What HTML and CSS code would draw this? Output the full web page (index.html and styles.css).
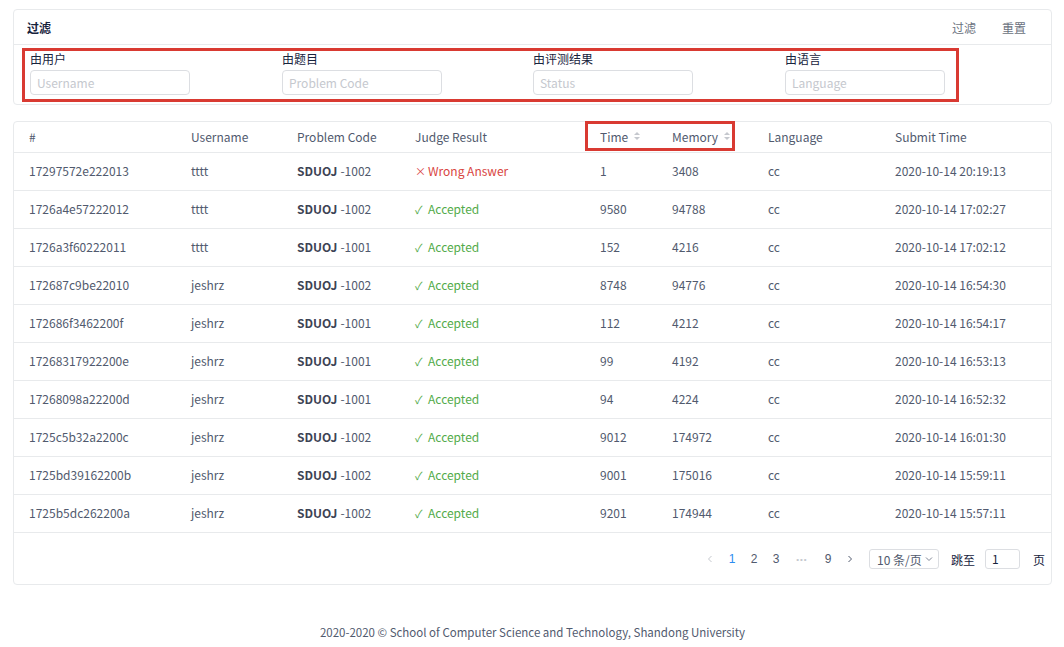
FILE: index.html
```html
<!DOCTYPE html>
<html lang="zh-CN">
<head>
<meta charset="utf-8">
<title>提交列表</title>
<link rel="stylesheet" href="styles.css">
</head>
<body>
<div class="page">
  <section class="card filter-card">
    <div class="card-head">
      <span class="card-title">过滤</span>
      <div class="head-actions">
        <span class="link-btn">过滤</span>
        <span class="link-btn">重置</span>
      </div>
    </div>
    <div class="filter-body">
      <div class="filter-grid">
        <div class="field"><label>由用户</label><div class="input">Username</div></div>
        <div class="field"><label>由题目</label><div class="input">Problem Code</div></div>
        <div class="field"><label>由评测结果</label><div class="input">Status</div></div>
        <div class="field"><label>由语言</label><div class="input">Language</div></div>
      </div>
    </div>
  </section>

  <section class="card table-card">
    <div class="highlight"></div>
    <div class="row head">
      <div class="cell">#</div>
      <div class="cell">Username</div>
      <div class="cell">Problem Code</div>
      <div class="cell">Judge Result</div>
      <div class="cell">Time<span class="sorter"><i class="up"></i><i class="down"></i></span></div>
      <div class="cell">Memory<span class="sorter"><i class="up"></i><i class="down"></i></span></div>
      <div class="cell">Language</div>
      <div class="cell">Submit Time</div>
    </div>
    <div class="row"><div class="cell">17297572e222013</div><div class="cell">tttt</div><div class="cell"><b>SDUOJ</b> -1002</div><div class="cell wa"><span class="ico">×</span>Wrong Answer</div><div class="cell">1</div><div class="cell">3408</div><div class="cell">cc</div><div class="cell">2020-10-14 20:19:13</div></div>
    <div class="row"><div class="cell">1726a4e57222012</div><div class="cell">tttt</div><div class="cell"><b>SDUOJ</b> -1002</div><div class="cell ac"><span class="ico">✓</span>Accepted</div><div class="cell">9580</div><div class="cell">94788</div><div class="cell">cc</div><div class="cell">2020-10-14 17:02:27</div></div>
    <div class="row"><div class="cell">1726a3f60222011</div><div class="cell">tttt</div><div class="cell"><b>SDUOJ</b> -1001</div><div class="cell ac"><span class="ico">✓</span>Accepted</div><div class="cell">152</div><div class="cell">4216</div><div class="cell">cc</div><div class="cell">2020-10-14 17:02:12</div></div>
    <div class="row"><div class="cell">172687c9be22010</div><div class="cell">jeshrz</div><div class="cell"><b>SDUOJ</b> -1002</div><div class="cell ac"><span class="ico">✓</span>Accepted</div><div class="cell">8748</div><div class="cell">94776</div><div class="cell">cc</div><div class="cell">2020-10-14 16:54:30</div></div>
    <div class="row"><div class="cell">172686f3462200f</div><div class="cell">jeshrz</div><div class="cell"><b>SDUOJ</b> -1001</div><div class="cell ac"><span class="ico">✓</span>Accepted</div><div class="cell">112</div><div class="cell">4212</div><div class="cell">cc</div><div class="cell">2020-10-14 16:54:17</div></div>
    <div class="row"><div class="cell">17268317922200e</div><div class="cell">jeshrz</div><div class="cell"><b>SDUOJ</b> -1001</div><div class="cell ac"><span class="ico">✓</span>Accepted</div><div class="cell">99</div><div class="cell">4192</div><div class="cell">cc</div><div class="cell">2020-10-14 16:53:13</div></div>
    <div class="row"><div class="cell">17268098a22200d</div><div class="cell">jeshrz</div><div class="cell"><b>SDUOJ</b> -1001</div><div class="cell ac"><span class="ico">✓</span>Accepted</div><div class="cell">94</div><div class="cell">4224</div><div class="cell">cc</div><div class="cell">2020-10-14 16:52:32</div></div>
    <div class="row"><div class="cell">1725c5b32a2200c</div><div class="cell">jeshrz</div><div class="cell"><b>SDUOJ</b> -1002</div><div class="cell ac"><span class="ico">✓</span>Accepted</div><div class="cell">9012</div><div class="cell">174972</div><div class="cell">cc</div><div class="cell">2020-10-14 16:01:30</div></div>
    <div class="row"><div class="cell">1725bd39162200b</div><div class="cell">jeshrz</div><div class="cell"><b>SDUOJ</b> -1002</div><div class="cell ac"><span class="ico">✓</span>Accepted</div><div class="cell">9001</div><div class="cell">175016</div><div class="cell">cc</div><div class="cell">2020-10-14 15:59:11</div></div>
    <div class="row last"><div class="cell">1725b5dc262200a</div><div class="cell">jeshrz</div><div class="cell"><b>SDUOJ</b> -1002</div><div class="cell ac"><span class="ico">✓</span>Accepted</div><div class="cell">9201</div><div class="cell">174944</div><div class="cell">cc</div><div class="cell">2020-10-14 15:57:11</div></div>

    <div class="pager">
      <span class="pg arrow disabled"><svg width="8" height="8" viewBox="0 0 8 8"><path d="M5.5 1 2.5 4l3 3" fill="none" stroke="currentColor" stroke-width="1"/></svg></span>
      <span class="pg active">1</span>
      <span class="pg">2</span>
      <span class="pg">3</span>
      <span class="pg dots">•••</span>
      <span class="pg">9</span>
      <span class="pg arrow"><svg width="8" height="8" viewBox="0 0 8 8"><path d="M2.5 1 5.5 4l-3 3" fill="none" stroke="currentColor" stroke-width="1"/></svg></span>
      <span class="size-select">10 条/页<svg width="8" height="6" viewBox="0 0 8 6"><path d="M1 1.5 4 4.5 7 1.5" fill="none" stroke="currentColor" stroke-width="1"/></svg></span>
      <span class="jump">跳至</span>
      <span class="jump-input">1</span>
      <span class="jump last">页</span>
    </div>
  </section>

  <footer class="footer">2020-2020 © School of Computer Science and Technology, Shandong University</footer>
</div>
</body>
</html>
```
FILE: styles.css
```css
* { box-sizing: border-box; }
html, body { margin: 0; padding: 0; background: #fff; }
body {
  font-family: "Noto Sans CJK SC", "Noto Sans", sans-serif;
  font-size: 12px;
  color: #515a6e;
  width: 1064px;
}
.page { padding: 9px 12px 0 13px; }

.card {
  border: 1px solid #e8eaec;
  border-radius: 4px;
  background: #fff;
}

.filter-card { height: 96px; }
.card-head {
  height: 35px;
  border-bottom: 1px solid #e8eaec;
  display: flex;
  align-items: center;
  justify-content: space-between;
  padding: 0 25px 0 13px;
}
.card-title { font-weight: 700; color: #17233d; font-size: 12px; }
.head-actions { display: flex; gap: 26px; }
.link-btn { color: #6b7280; }

.filter-body { padding: 3px 0 0 8px; }
.filter-grid {
  width: 937px;
  height: 54px;
  border: 3px solid #d93a32;
  display: grid;
  grid-template-columns: 252px 251px 252px 1fr;
  padding: 0 0 0 5px;
}
.field label { display: block; color: #17233d; line-height: 16px; height: 16px; }
.field .input {
  margin-top: 3px;
  width: 160px;
  height: 25px;
  border: 1px solid #dcdee2;
  border-radius: 4px;
  color: #c5c8ce;
  padding: 0 6px;
  line-height: 23px;
}

.table-card {
  margin-top: 16px;
  position: relative;
  height: 464px;
}
.highlight {
  position: absolute;
  left: 571px;
  top: -1px;
  width: 150px;
  height: 30px;
  border: 3px solid #d93a32;
  pointer-events: none;
}
.row {
  display: grid;
  grid-template-columns: 162px 106px 118px 185px 72px 96px 127px 1fr;
  height: 38px;
  align-items: center;
  border-bottom: 1px solid #e8eaec;
  padding-bottom: 2px;
}
.row.head { height: 31px; }
.cell { padding-left: 15px; white-space: nowrap; display: flex; align-items: center; }
.cell b { font-weight: 700; color: #3d4354; margin-right: 3px; }
.wa { color: #d9453f; }
.ac { color: #52ab49; }
.ico { display: inline-block; width: 13px; font-size: 11px; }

.sorter {
  display: inline-flex;
  flex-direction: column;
  gap: 2px;
  margin-left: 6px;
}
.sorter i {
  width: 0; height: 0;
  border-left: 3px solid transparent;
  border-right: 3px solid transparent;
}
.sorter .up { border-bottom: 3px solid #c5c8ce; }
.sorter .down { border-top: 3px solid #c5c8ce; }

.pager {
  display: flex;
  align-items: center;
  justify-content: flex-end;
  height: 52px;
  padding-right: 6px;
}
.pg {
  min-width: 22px;
  text-align: center;
  color: #515a6e;
  font-family: "Liberation Sans", sans-serif;
}
.pg.active { color: #2d8cf0; }
.pg.arrow { display: inline-flex; justify-content: center; color: #515a6e; }
.pg.arrow.disabled { color: #c5c8ce; }
.pg.dots { color: #c5c8ce; font-size: 8px; letter-spacing: 1px; min-width: 30px; }
.size-select {
  margin-left: 8px;
  width: 70px;
  height: 20px;
  border: 1px solid #dcdee2;
  border-radius: 3px;
  display: inline-flex;
  align-items: center;
  gap: 3px;
  padding-left: 7px;
  color: #515a6e;
}
.size-select svg { color: #808695; }
.jump { margin-left: 12px; color: #17233d; }
.jump.last { margin-left: 13px; }
.jump-input {
  margin-left: 10px;
  width: 35px;
  height: 20px;
  border: 1px solid #dcdee2;
  border-radius: 3px;
  padding-left: 6px;
  line-height: 18px;
  color: #17233d;
}

.footer {
  text-align: center;
  margin-top: 39px;
  color: #515a6e;
  line-height: 17px;
  font-size: 11.5px;
}
```
